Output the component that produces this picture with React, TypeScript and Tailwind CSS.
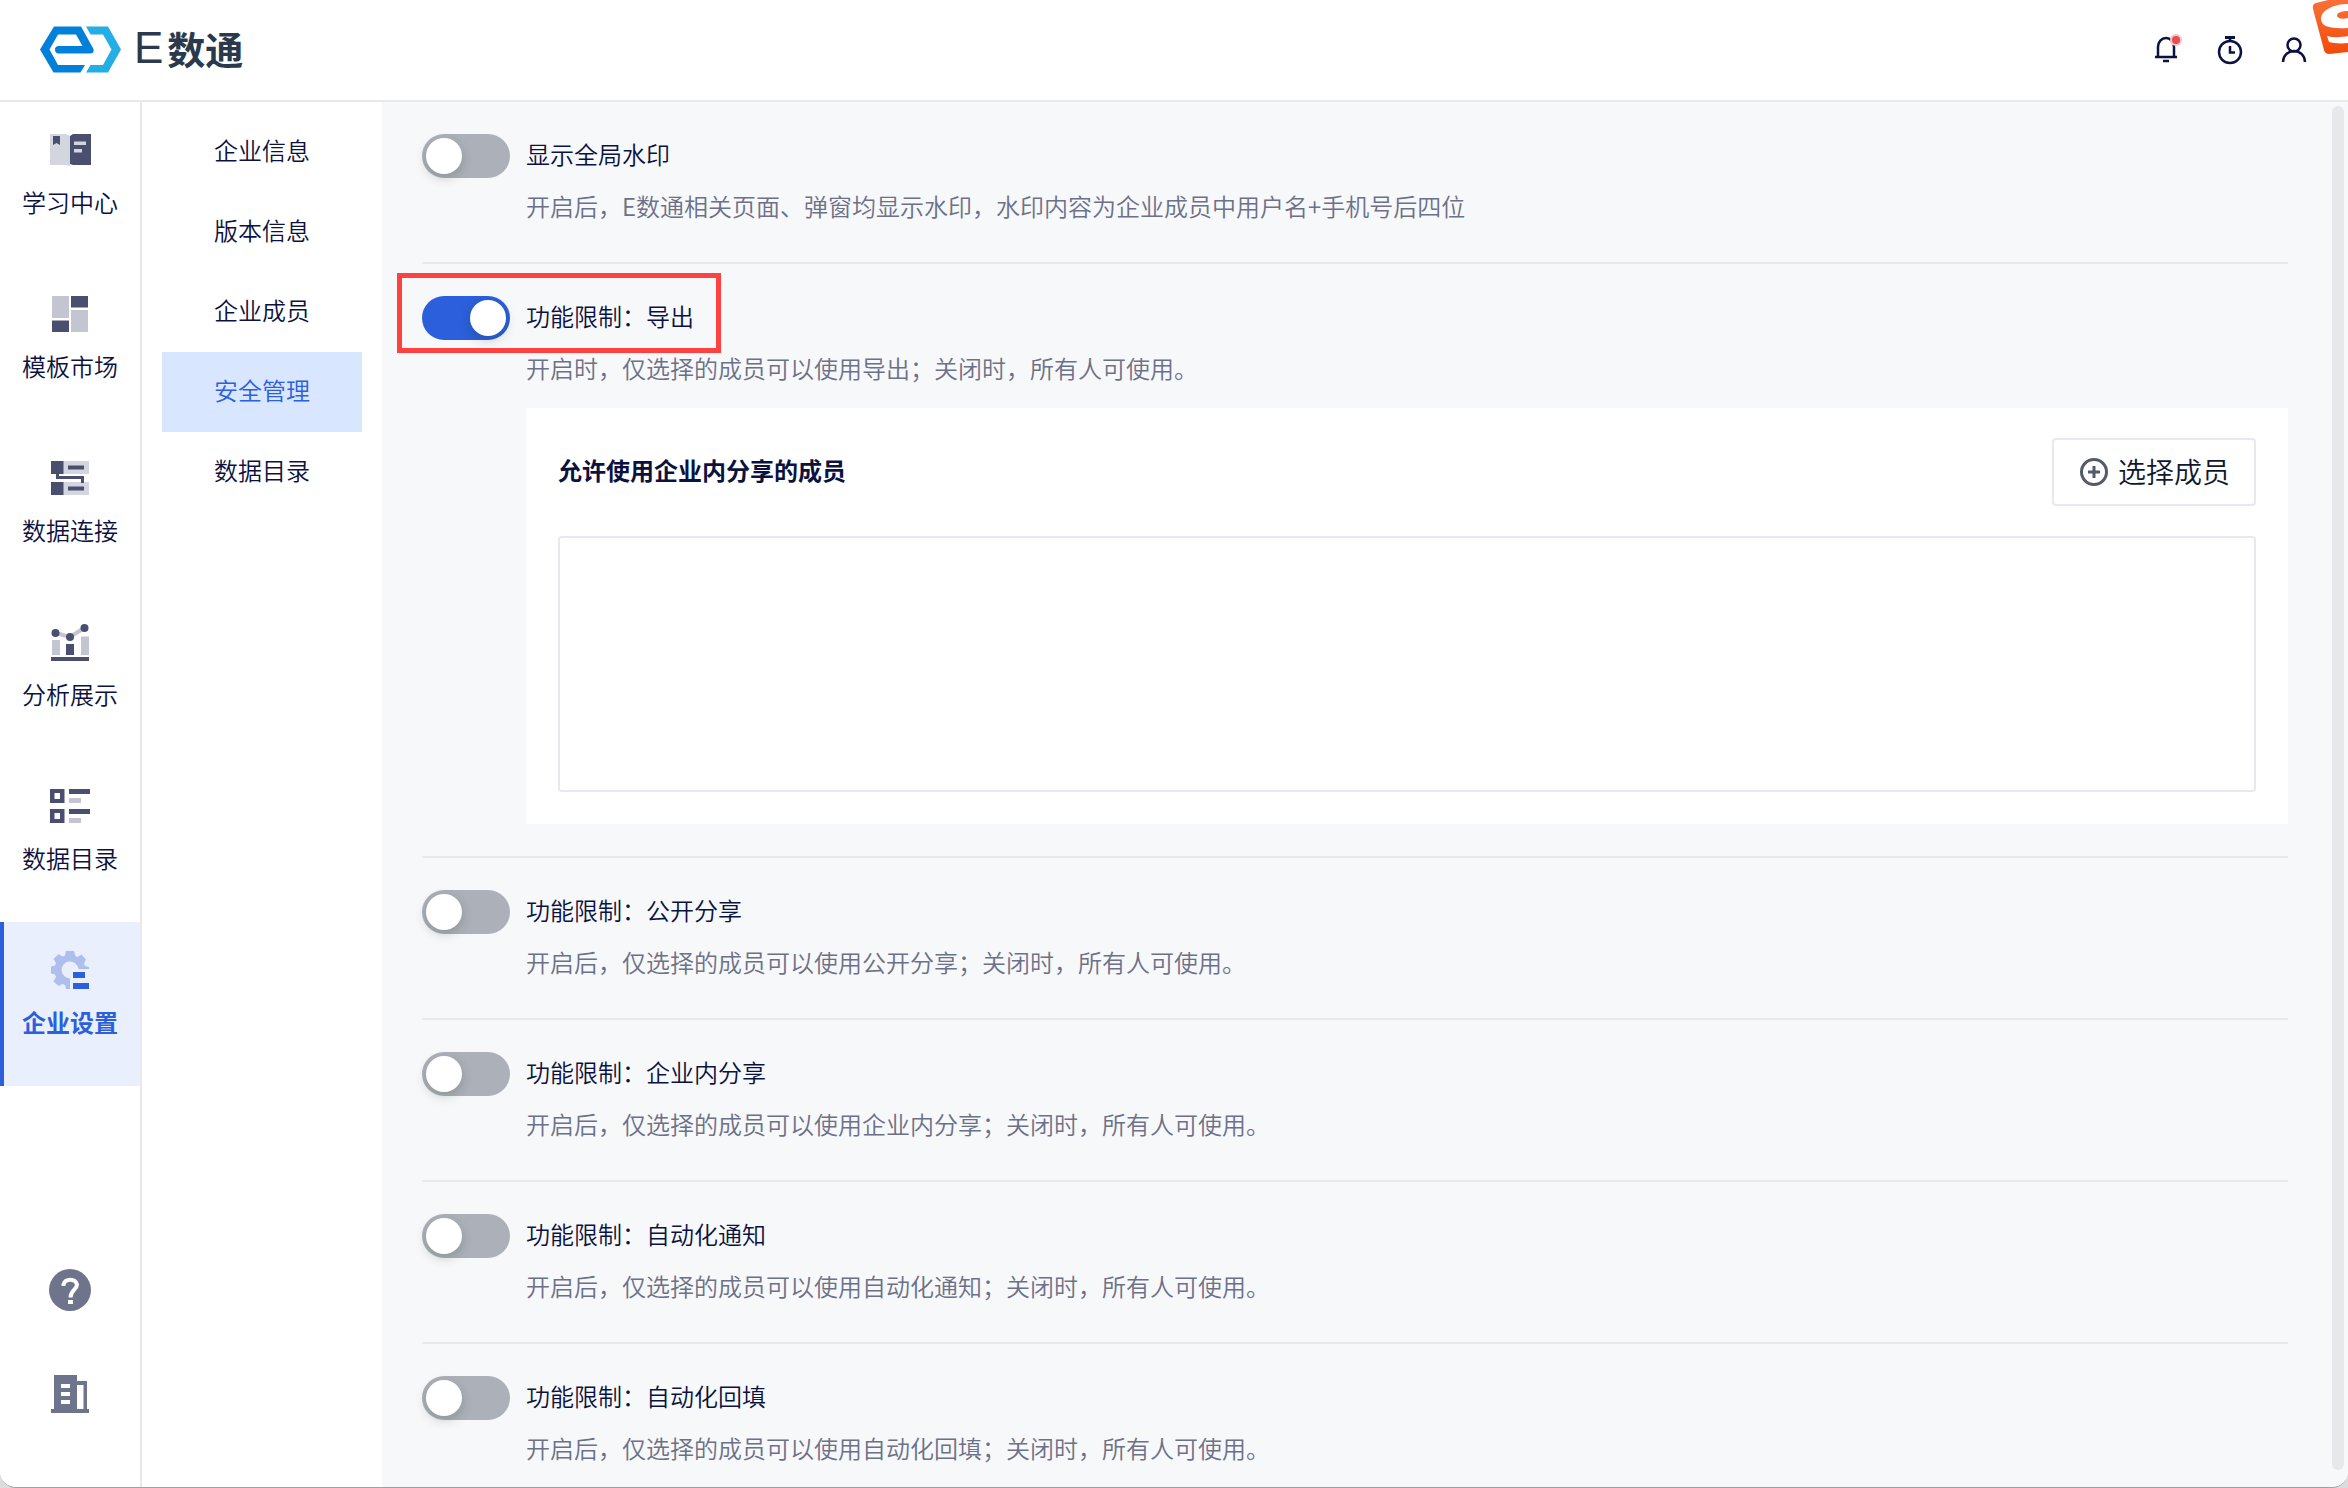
import { useState } from 'react'
import type { ReactNode } from 'react'

const dark = '#4a4f70'
const pale = '#c3c5d0'

function Logo() {
  return (
    <div className="flex items-center gap-3">
      <svg width="82" height="48" viewBox="0 0 82 48">
        <path
          fill="#0080d9"
          d="M14 0.500 H41 L53.500 23 Q54.500 27.500 50 27.500 H18 Q15 27 15 23.500 Q15 20.500 18 20 H42.500 L36 8.500 H18 L9.500 23.500 L18 39 H45 L40.500 46.500 H13.500 L0 23.500 Z"
        />
        <path
          fill="#23aee5"
          d="M46 0.500 H68 L81 23.500 L68 46.500 H46 L50.500 39 H63 L71.500 23.500 L63 8.500 H50.500 Z"
        />
      </svg>
      <div className="flex items-center gap-1 pb-1 text-[#2b394c]">
        <span className="text-[44px] leading-[48px] font-['Liberation_Sans',sans-serif]">E</span>
        <span className="text-[38px] leading-[48px] font-bold">数通</span>
      </div>
    </div>
  )
}

function BookIcon() {
  return (
    <svg width="42" height="40" viewBox="0 0 42 40">
      <path d="M1 4 H17 L21 6 V36 L17 35 H1 Z" fill="#d4d6df" />
      <path d="M4 6 H11 V15 L7.500 13 L4 15 Z" fill={dark} />
      <path d="M21 6 L24 4 H42 V35 H24 L21 34 Z" fill={dark} />
      <path d="M25 11.500 H37 V15 H25 Z M25 19 H33 V22.500 H25 Z" fill="#d4d6df" />
    </svg>
  )
}

function TemplateIcon() {
  return (
    <svg width="42" height="40" viewBox="0 0 42 40">
      <path d="M3 2 H20 V24 H3 Z M22 16 H39 V38 H22 Z" fill={pale} />
      <path d="M22 2 H39 V13.500 H22 Z M3 26.500 H20 V38 H3 Z" fill={dark} />
    </svg>
  )
}

function ConnectIcon() {
  return (
    <svg width="42" height="40" viewBox="0 0 42 40">
      <path d="M14 3 H40 V16 H14 Z M14 24 H40 V37 H14 Z" fill="#d4d6df" />
      <path d="M2 3 H14.500 V16 H2 Z M2 24 H14.500 V37 H2 Z M19 7.500 H35 V11.500 H19 Z M19 28.500 H35 V32.500 H19 Z" fill={dark} />
      <path d="M8.500 15 V19.500 H33.500 V25" fill="none" stroke={dark} strokeWidth="3" />
    </svg>
  )
}

function ChartIcon() {
  return (
    <svg width="42" height="40" viewBox="0 0 42 40">
      <path d="M7 11 L21 15 L35 6" fill="none" stroke={pale} strokeWidth="4" />
      <path d="M3 18 H11 V33 H3 Z M32 14.500 H40 V33 H32 Z" fill={pale} />
      <path d="M17 22 H25 V33 H17 Z M2 35 H40 V39 H2 Z" fill={dark} />
      <g fill={dark}>
        <circle cx="6.500" cy="11" r="4" />
        <circle cx="21" cy="15" r="4" />
        <circle cx="35.500" cy="6" r="4" />
      </g>
    </svg>
  )
}

function CatalogIcon() {
  return (
    <svg width="42" height="40" viewBox="0 0 42 40">
      <path
        fill={dark}
        fillRule="evenodd"
        d="M1 3 H15.500 V17 H1 Z M5.500 7 V13 H11 V7 Z M1 23 H15.500 V37 H1 Z M5.500 27 V33 H11 V27 Z M20 3 H41 V8 H20 Z M20 23 H41 V28 H20 Z"
      />
      <path d="M20 12 H32 V17 H20 Z M20 32 H32 V37 H20 Z" fill={pale} />
    </svg>
  )
}

function SettingsIcon() {
  return (
    <svg width="42" height="40" viewBox="0 0 42 40">
      <path
        fill="#aebfee"
        d="M17 1 H25 L26.500 6 L28.500 7 L32.500 4.500 L37 9.500 L35 13.500 L36 16 L40 17 V19 H29.500 A8.500 8.500 0 1 0 21 28.500 V39 H17 L16 35 L13.500 34 L9.500 36 L4.500 31.500 L7 27 L6 24.500 L2 23.500 V16.500 L6 15.500 L7 13 L4.500 9 L9.500 4 L13.500 6.500 L16 5.500 Z"
      />
      <path d="M24 22 H36 V28 H24 Z M24 33 H40 V39 H24 Z" fill="#2c5fdb" />
    </svg>
  )
}

const menus: { name: string; icon: ReactNode }[] = [
  { name: '学习中心', icon: <BookIcon /> },
  { name: '模板市场', icon: <TemplateIcon /> },
  { name: '数据连接', icon: <ConnectIcon /> },
  { name: '分析展示', icon: <ChartIcon /> },
  { name: '数据目录', icon: <CatalogIcon /> },
  { name: '企业设置', icon: <SettingsIcon /> },
]

const subMenus = ['企业信息', '版本信息', '企业成员', '安全管理', '数据目录']

const settings = [
  { id: 'watermark', title: '显示全局水印', desc: '开启后，E数通相关页面、弹窗均显示水印，水印内容为企业成员中用户名+手机号后四位' },
  { id: 'export', title: '功能限制：导出', desc: '开启时，仅选择的成员可以使用导出；关闭时，所有人可使用。' },
  { id: 'public', title: '功能限制：公开分享', desc: '开启后，仅选择的成员可以使用公开分享；关闭时，所有人可使用。' },
  { id: 'internal', title: '功能限制：企业内分享', desc: '开启后，仅选择的成员可以使用企业内分享；关闭时，所有人可使用。' },
  { id: 'notify', title: '功能限制：自动化通知', desc: '开启后，仅选择的成员可以使用自动化通知；关闭时，所有人可使用。' },
  { id: 'backfill', title: '功能限制：自动化回填', desc: '开启后，仅选择的成员可以使用自动化回填；关闭时，所有人可使用。' },
]

function Header() {
  return (
    <header className="flex h-[102px] shrink-0 items-center justify-between border-b-2 border-[#e8e9ee] bg-white pl-10 pr-8">
      <Logo />
      <div className="flex items-center gap-6">
        <button aria-label="消息">
          <svg width="40" height="40" viewBox="0 0 40 40">
            <path d="M7 27 H29 M10 27 V17 A8 9 0 0 1 26 17 V27" fill="none" stroke="#0b1240" strokeWidth="2.500" />
            <path d="M15 31 H21" stroke="#0b1240" strokeWidth="2.500" />
            <circle cx="28" cy="10" r="6" fill="#f6c4c6" />
            <circle cx="28" cy="10" r="4" fill="#e64c50" />
          </svg>
        </button>
        <button aria-label="定时任务">
          <svg width="40" height="40" viewBox="0 0 40 40">
            <circle cx="18" cy="22" r="11" fill="none" stroke="#0b1240" strokeWidth="2.500" />
            <path d="M13 7.500 H23" stroke="#0b1240" strokeWidth="3" />
            <path d="M18 8 V11 M18 16 V22.500 H23" fill="none" stroke="#0b1240" strokeWidth="2.500" />
          </svg>
        </button>
        <button aria-label="个人中心">
          <svg width="40" height="40" viewBox="0 0 40 40">
            <circle cx="18" cy="15" r="6.500" fill="none" stroke="#0b1240" strokeWidth="2.500" />
            <path d="M7 32 A11 11 0 0 1 29 32" fill="none" stroke="#0b1240" strokeWidth="2.500" />
          </svg>
        </button>
      </div>
    </header>
  )
}

function SideBar() {
  return (
    <nav className="flex w-[142px] shrink-0 flex-col border-r-2 border-[#e8e9ee] bg-white">
      {menus.map(m => {
        const active = m.name === '企业设置'
        return (
          <a
            key={m.name}
            href="#"
            className={`flex h-[164px] flex-col items-center border-x-4 border-r-transparent pt-7 ${
              active ? 'border-l-[#2c5fdb] bg-[#e9effc] font-bold text-[#2c5fdb]' : 'border-l-transparent'
            }`}
          >
            {m.icon}
            <span className="mt-3.5 leading-9">{m.name}</span>
          </a>
        )
      })}
      <div className="mt-auto flex flex-col items-center gap-16 pb-[74px]">
        <button aria-label="帮助">
          <svg width="42" height="42" viewBox="0 0 42 42">
            <circle cx="21" cy="21" r="21" fill="#6e748c" />
            <path d="M14.500 17 V15.500 A7 6.500 0 0 1 28 15.500 C28 20.500 21.500 21 21.500 28.500" fill="none" stroke="#fff" strokeWidth="4" />
            <path d="M19 31 H24 V35 H19 Z" fill="#fff" />
          </svg>
        </button>
        <button aria-label="企业">
          <svg width="38" height="38" viewBox="0 0 38 38">
            <path
              fill="#6e748c"
              fillRule="evenodd"
              d="M3 0 H26 V6 H36 V34 H38 V38 H0 V34 H3 Z M10 9 V13 H19 V9 Z M10 17 V21 H19 V17 Z M10 25 V29 H19 V25 Z M26 10 V34 H32.500 V10 Z"
            />
          </svg>
        </button>
      </div>
    </nav>
  )
}

function Switch({ id, checked, onChange }: { id: string; checked: boolean; onChange: () => void }) {
  return (
    <span className="relative flex h-11 w-[88px] shrink-0">
      <input
        id={id}
        type="checkbox"
        role="switch"
        checked={checked}
        onChange={onChange}
        className="peer h-full w-full cursor-pointer appearance-none rounded-full bg-[#acb1b9] checked:bg-[#2c5fdb]"
      />
      <span className="pointer-events-none absolute left-1 top-1 size-9 rounded-full bg-white shadow-[0_4px_12px_rgba(0,35,11,0.2)] peer-checked:left-auto peer-checked:right-1" />
    </span>
  )
}

function MemberPanel() {
  return (
    <div className="mt-4 bg-white px-8 pb-8 pt-[30px]">
      <div className="flex items-center justify-between">
        <h2 className="pb-1 font-bold">允许使用企业内分享的成员</h2>
        <button className="flex h-[68px] items-center gap-2 rounded border-2 border-[#e8e9ee] px-6 text-[28px] text-[#101830]">
          <svg width="32" height="32" viewBox="0 0 32 32" fill="none" stroke="#555a69" strokeWidth="3">
            <circle cx="16" cy="16" r="12.500" />
            <path d="M16 10 V22 M10 16 H22" />
          </svg>
          选择成员
        </button>
      </div>
      <div className="mt-[30px] h-64 rounded border-2 border-[#e8e9ee]" />
    </div>
  )
}

export default function App() {
  const [enabled, setEnabled] = useState<string[]>(['export'])

  const toggle = (id: string) =>
    setEnabled(list => (list.includes(id) ? list.filter(i => i !== id) : [...list, id]))

  return (
    <div className="h-screen bg-[#dcdcde]">
      <div className="relative flex h-full flex-col overflow-hidden rounded-b-2xl border-b border-[#a0a0a4] bg-white font-['Noto_Sans_CJK_SC',sans-serif] text-2xl font-[350] text-[#0b1240]">
        <Header />

        <div className="flex min-h-0 flex-1">
          <SideBar />

          {/* 二级菜单 */}
          <nav className="flex w-60 shrink-0 flex-col bg-white px-5 pt-[10px]">
            {subMenus.map(name => (
              <a
                key={name}
                href="#"
                className={`flex h-20 items-center justify-center pb-1 ${name === '安全管理' ? 'bg-[#d9e6ff] text-[#2c5fdb]' : ''}`}
              >
                {name}
              </a>
            ))}
          </nav>

          <main className="relative min-w-0 flex-1 overflow-hidden bg-[#f7f8fa] pl-10 pr-[60px]">
            {settings.map(s => (
              <section key={s.id} className="border-b-2 border-[#e8e9ec] py-8">
                <div className="relative flex items-center gap-4">
                  <Switch id={s.id} checked={enabled.includes(s.id)} onChange={() => toggle(s.id)} />
                  <label htmlFor={s.id} className="pb-1">{s.title}</label>
                  {s.id === 'export' && (
                    <span className="pointer-events-none absolute -left-[25px] -top-[23px] h-20 w-[324px] border-[5px] border-[#fe4242]" />
                  )}
                </div>
                <div className="ml-[104px]">
                  <p className="pb-1.5 pt-2.5 leading-9 text-[#6c7088]">{s.desc}</p>
                  {s.id === 'export' && enabled.includes(s.id) && <MemberPanel />}
                </div>
              </section>
            ))}
            <div className="absolute bottom-[17px] right-1 top-1 w-3 rounded-full bg-[#e7e8ec]" />
          </main>
        </div>

        {/* 输入法悬浮标 */}
        <svg className="absolute right-0 top-0" width="36" height="56" viewBox="0 0 36 56">
          <defs>
            <linearGradient id="ime" x1="0" y1="0" x2="0" y2="1">
              <stop offset="0" stopColor="#fb7038" />
              <stop offset="1" stopColor="#f24a0a" />
            </linearGradient>
          </defs>
          <path d="M4 3 L16 0 H36 V52 L17 54 Q13 54 12 50 L1 9 Q0 4 4 3 Z" fill="url(#ime)" />
          <path d="M36 4 C22 4 9 10 9 19 C9 27 20 29 36 28 V18 C29 20 25 18 25 15 C26 12 31 11 36 11 Z" fill="#fff" />
          <path d="M15 36 C22 38 30 37 36 36 V43 C28 44 21 43 17 42 Z" fill="#fff" />
        </svg>
      </div>
    </div>
  )
}
